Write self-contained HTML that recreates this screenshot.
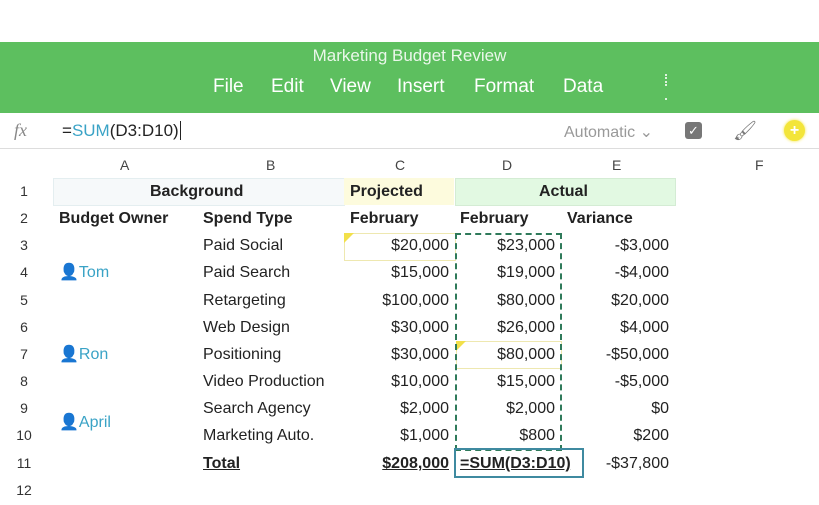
<!DOCTYPE html>
<html><head><style>
body{margin:0;width:819px;height:505px;overflow:hidden;background:#fff;font-family:"Liberation Sans",sans-serif;position:relative}
.a{position:absolute;white-space:nowrap}
.g{position:absolute;left:0;top:42px;width:819px;height:71px;background:#5dbf5f}
.m{position:absolute;top:76px;color:#fff;font-size:19px}
.r{position:absolute;left:0;width:819px;height:27px;line-height:27px;font-size:16px;color:#222}
.r div{position:absolute;white-space:nowrap}
.n{left:14px;width:20px;text-align:center;font-size:14px;color:#333}
.ca{left:59px}.cb{left:203px}
.cc{right:370px;text-align:right}.cd{right:264px;text-align:right}.ce{right:150px;text-align:right}
.bo{font-weight:bold}
.p{color:#3aa3c6}
.h{font-size:14px;color:#444;top:157px}
</style></head><body>
<div class="g"></div>
<div class="a" style="top:46px;left:0;width:819px;text-align:center;color:#eaf7ea;font-size:17px">Marketing Budget Review</div>
<div class="m" style="left:213px">File</div><div class="m" style="left:271px">Edit</div><div class="m" style="left:330px">View</div><div class="m" style="left:397px">Insert</div><div class="m" style="left:474px">Format</div><div class="m" style="left:563px">Data</div>
<div class="a" style="left:665px;top:74px;width:2px;height:12px;border-left:2px dotted #dff2df"></div>
<div class="a" style="left:665px;top:98px;width:2px;height:2px;background:#dff2df"></div>
<div class="a" style="top:120px;left:14px;font-family:'Liberation Serif',serif;font-style:italic;color:#888;font-size:18px">fx</div>
<div class="a" style="top:121px;left:62px;font-size:17px;color:#222">=<span style="color:#3aa3c6">SUM</span>(D3:D10)<span style="border-left:1.5px solid #222;margin-left:1px"></span></div>
<div class="a" style="top:122px;left:564px;font-size:16px;color:#999">Automatic &#8964;</div>
<div class="a" style="top:122px;left:685px;width:17px;height:17px;background:#777;border-radius:3px;color:#fff;font-size:13px;text-align:center;line-height:17px">✓</div>
<div class="a" style="top:119px;left:733px;font-size:19px;color:#777">🖌</div>
<div class="a" style="top:120px;left:784px;width:21px;height:21px;background:#f3e53a;border-radius:50%;box-shadow:0 0 3px #f3e53a;color:#fff;text-align:center;line-height:21px;font-weight:bold">+</div>
<div class="a" style="top:148px;left:0;width:819px;height:1px;background:#ddd"></div>
<div class="a h" style="left:120px">A</div><div class="a h" style="left:266px">B</div><div class="a h" style="left:395px">C</div><div class="a h" style="left:502px">D</div><div class="a h" style="left:612px">E</div><div class="a h" style="left:755px">F</div>
<div class="a" style="left:53px;top:178px;width:290px;height:26px;background:#f6f9fa;border:1px solid #e4eef0"></div>
<div class="a" style="left:344px;top:178px;width:110px;height:27px;background:#fdfbdd"></div>
<div class="a" style="left:455px;top:178px;width:219px;height:26px;background:#e2f9e2;border:1px solid #d4ecd4"></div>
<div class="a" style="left:344px;top:233px;width:110px;height:26px;border:1px solid #eee8b0"></div>
<div class="a" style="left:344px;top:233px;width:0;height:0;border-top:10px solid #f2e04a;border-right:10px solid transparent"></div>
<div class="a" style="left:456px;top:341px;width:104px;height:26px;border:1px solid #eee8b0"></div>
<div class="a" style="left:456px;top:341px;width:0;height:0;border-top:10px solid #f2e04a;border-right:10px solid transparent"></div>
<div class="a" style="left:455px;top:233px;width:103px;height:214px;border:2px dashed #2f7a5a"></div>
<div class="a" style="left:454px;top:448px;width:130px;height:30px;border:2px solid #3f8aa0;box-sizing:border-box"></div>
<div class="r" style="top:178px"><div class="n">1</div><div class="bo" style="left:150px">Background</div><div class="bo" style="left:350px">Projected</div><div class="bo" style="left:539px">Actual</div></div>
<div class="r" style="top:205px"><div class="n">2</div><div class="ca bo">Budget Owner</div><div class="cb bo">Spend Type</div><div class="bo" style="left:350px">February</div><div class="bo" style="left:460px">February</div><div class="bo" style="left:567px">Variance</div></div>
<div class="r" style="top:232px"><div class="n">3</div><div class="cb">Paid Social</div><div class="cc">$20,000</div><div class="cd">$23,000</div><div class="ce">-$3,000</div></div>
<div class="r" style="top:259px"><div class="n">4</div><div class="ca p">👤Tom</div><div class="cb">Paid Search</div><div class="cc">$15,000</div><div class="cd">$19,000</div><div class="ce">-$4,000</div></div>
<div class="r" style="top:287px"><div class="n">5</div><div class="cb">Retargeting</div><div class="cc">$100,000</div><div class="cd">$80,000</div><div class="ce">$20,000</div></div>
<div class="r" style="top:314px"><div class="n">6</div><div class="cb">Web Design</div><div class="cc">$30,000</div><div class="cd">$26,000</div><div class="ce">$4,000</div></div>
<div class="r" style="top:341px"><div class="n">7</div><div class="ca p">👤Ron</div><div class="cb">Positioning</div><div class="cc">$30,000</div><div class="cd">$80,000</div><div class="ce">-$50,000</div></div>
<div class="r" style="top:368px"><div class="n">8</div><div class="cb">Video Production</div><div class="cc">$10,000</div><div class="cd">$15,000</div><div class="ce">-$5,000</div></div>
<div class="r" style="top:395px"><div class="n">9</div><div class="cb">Search Agency</div><div class="cc">$2,000</div><div class="cd">$2,000</div><div class="ce">$0</div></div>
<div class="r" style="top:409px"><div class="ca p">👤April</div></div>
<div class="r" style="top:422px"><div class="n">10</div><div class="cb">Marketing Auto.</div><div class="cc">$1,000</div><div class="cd">$800</div><div class="ce">$200</div></div>
<div class="r" style="top:450px"><div class="n">11</div><div class="cb bo" style="text-decoration:underline">Total</div><div class="cc bo" style="text-decoration:underline">$208,000</div><div class="bo" style="left:460px;text-decoration:underline">=SUM(D3:D10)</div><div class="ce">-$37,800</div></div>
<div class="r" style="top:477px"><div class="n">12</div></div>
</body></html>
